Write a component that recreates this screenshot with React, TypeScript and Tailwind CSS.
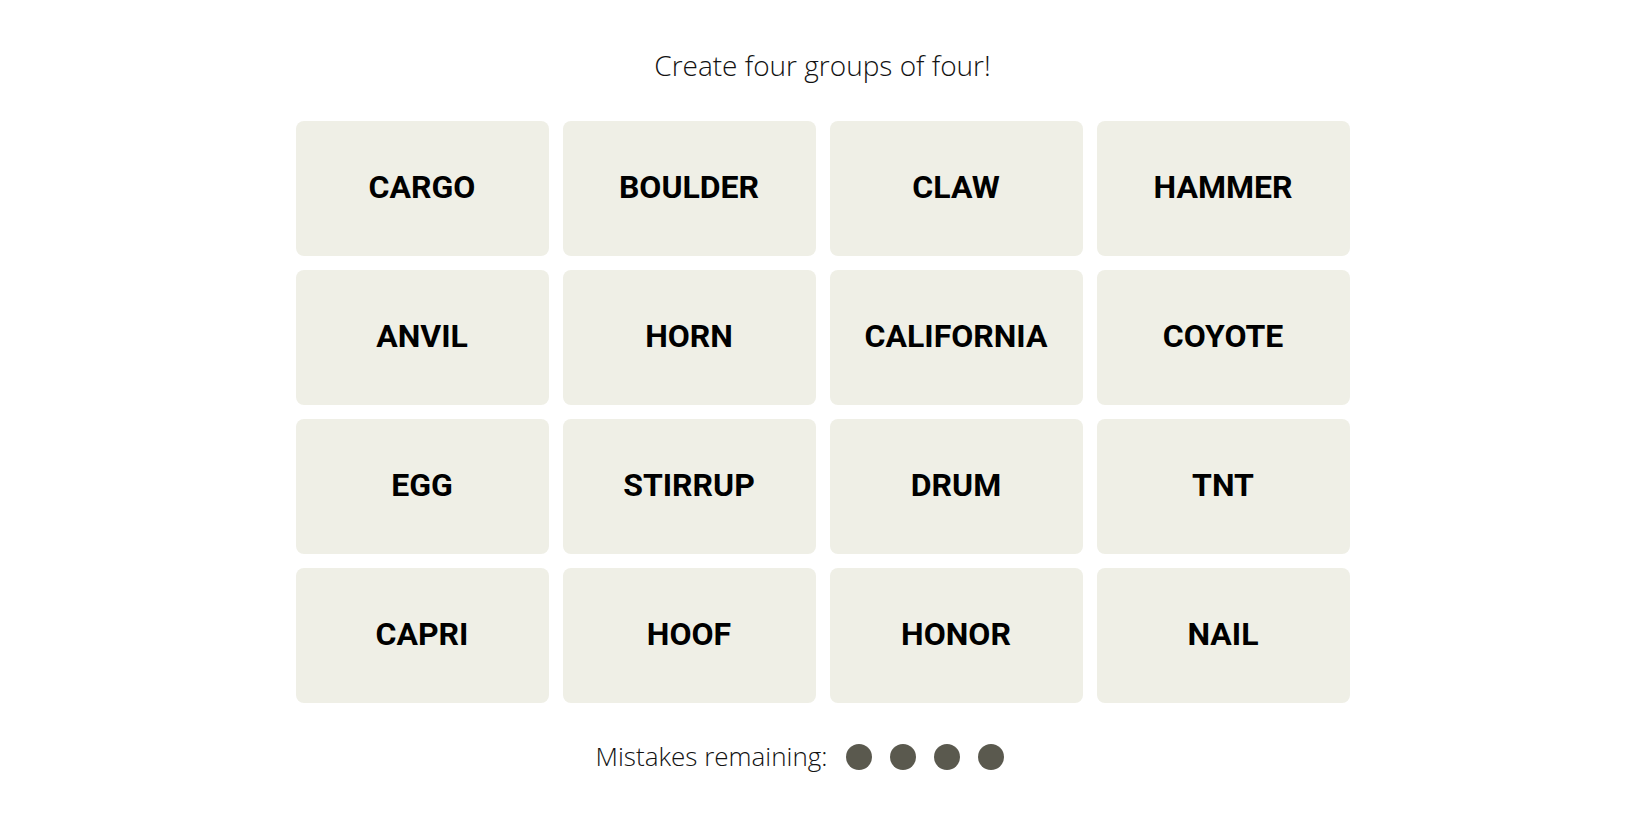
import React from "react";

const words = [
	"CARGO",
	"BOULDER",
	"CLAW",
	"HAMMER",
	"ANVIL",
	"HORN",
	"CALIFORNIA",
	"COYOTE",
	"EGG",
	"STIRRUP",
	"DRUM",
	"TNT",
	"CAPRI",
	"HOOF",
	"HONOR",
	"NAIL",
];

export default function App() {
	return (
		<div className="min-h-screen bg-white font-['Roboto',sans-serif] text-black">
			<div className="flex flex-col items-center pt-[47px] pr-[5px]">
				<h2 className="font-['Open_Sans',sans-serif] text-[28px] leading-[36px] font-light text-[#121212]">
					Create four groups of four!
				</h2>
				<div className="mt-[38px] grid grid-cols-[repeat(4,253px)] gap-[14px]">
					{words.map((word) => (
						<button
							key={word}
							className="h-[135px] rounded-lg bg-[#efefe6] flex items-center justify-center pb-[3px] text-[32px] font-bold uppercase"
						>
							{word}
						</button>
					))}
				</div>
				<div className="mt-[34px] pr-[45px] flex items-center">
					<span className="font-['Open_Sans',sans-serif] text-[26px] font-light text-[#121212]">
						Mistakes remaining:
					</span>
					<div className="ml-[19px] flex gap-[18px]">
						{[0, 1, 2, 3].map((i) => (
							<span
								key={i}
								className="size-[26px] rounded-full bg-[#5a594e]"
							/>
						))}
					</div>
				</div>
			</div>
		</div>
	);
}
